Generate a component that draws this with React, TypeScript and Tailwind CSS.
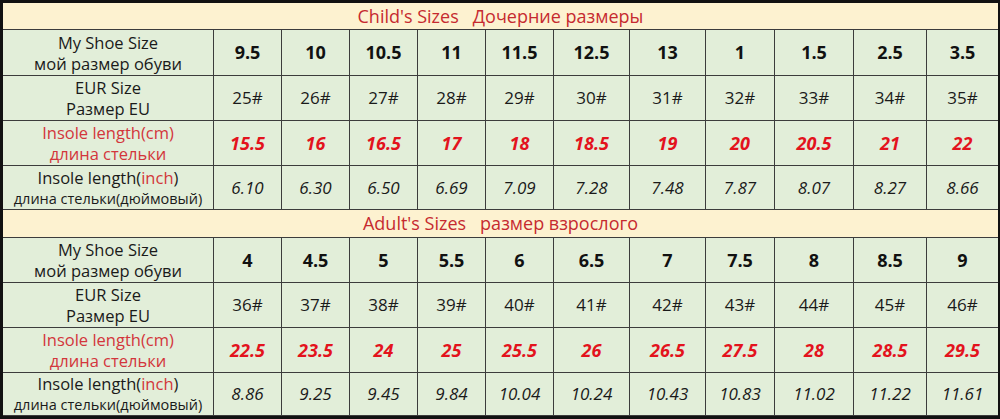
const COLS = 'grid-cols-[210px_67px_67px_67px_67px_67px_75px_75px_68px_78px_72px_1fr]'

type Section = {
  title: string
  shoe: string[]
  eur: string[]
  cm: string[]
  inch: string[]
}

const sections: Section[] = [
  {
    title: "Child's Sizes   Дочерние размеры",
    shoe: ['9.5', '10', '10.5', '11', '11.5', '12.5', '13', '1', '1.5', '2.5', '3.5'],
    eur: ['25#', '26#', '27#', '28#', '29#', '30#', '31#', '32#', '33#', '34#', '35#'],
    cm: ['15.5', '16', '16.5', '17', '18', '18.5', '19', '20', '20.5', '21', '22'],
    inch: ['6.10', '6.30', '6.50', '6.69', '7.09', '7.28', '7.48', '7.87', '8.07', '8.27', '8.66'],
  },
  {
    title: "Adult's Sizes   размер взрослого",
    shoe: ['4', '4.5', '5', '5.5', '6', '6.5', '7', '7.5', '8', '8.5', '9'],
    eur: ['36#', '37#', '38#', '39#', '40#', '41#', '42#', '43#', '44#', '45#', '46#'],
    cm: ['22.5', '23.5', '24', '25', '25.5', '26', '26.5', '27.5', '28', '28.5', '29.5'],
    inch: ['8.86', '9.25', '9.45', '9.84', '10.04', '10.24', '10.43', '10.83', '11.02', '11.22', '11.61'],
  },
]

function Row({
  label,
  values,
  height,
  valueClass,
}: {
  label: React.ReactNode
  values: string[]
  height: string
  valueClass: string
}) {
  return (
    <div className={`grid ${COLS} ${height} gap-px`}>
      <div className="flex flex-col items-center justify-center bg-[#e2eed9] text-center leading-[21px]">
        {label}
      </div>
      {values.map((v, i) => (
        <div key={i} className={`flex items-center justify-center bg-[#e2eed9] ${valueClass}`}>
          {v}
        </div>
      ))}
    </div>
  )
}

function SizeSection({ s, first }: { s: Section; first: boolean }) {
  return (
    <div className="flex flex-col gap-px">
      <div
        className={`flex items-center justify-center bg-[#fdf2d0] whitespace-pre text-[18px] text-[#c62a2f] ${
          first ? 'h-[26px]' : 'h-[27px]'
        }`}
      >
        {s.title}
      </div>
      <Row
        height={first ? 'h-[45px]' : 'h-[44px]'}
        values={s.shoe}
        valueClass="text-[18px] font-bold text-[#111]"
        label={
          <>
            <span className="text-[16.5px]">My Shoe Size</span>
            <span className="text-[16.5px]">мой размер обуви</span>
          </>
        }
      />
      <Row
        height="h-[44px]"
        values={s.eur}
        valueClass="text-[17px] text-[#1a1a1a]"
        label={
          <>
            <span className="text-[16.5px]">EUR Size</span>
            <span className="text-[16.5px]">Размер EU</span>
          </>
        }
      />
      <Row
        height="h-[44px]"
        values={s.cm}
        valueClass="text-[18px] font-bold italic text-[#e3131d]"
        label={
          <>
            <span className="text-[16.5px] text-[#d3363c]">Insole length(cm)</span>
            <span className="text-[16.5px] text-[#d3363c]">длина стельки</span>
          </>
        }
      />
      <Row
        height={first ? 'h-[43px]' : 'h-[42px]'}
        values={s.inch}
        valueClass="text-[17px] italic text-[#1a1a1a]"
        label={
          <>
            <span className="text-[16.5px]">
              Insole length(<span className="text-[#d2383a]">inch</span>)
            </span>
            <span className="text-[14.5px]">длина стельки(дюймовый)</span>
          </>
        }
      />
    </div>
  )
}

export default function App() {
  return (
    <div
      className="h-[419px] w-[1000px] overflow-hidden border-[3px] border-r-2 border-[#111] bg-[#111] text-[#1a1a1a]"
      style={{ fontFamily: '"Open Sans", "Noto Sans", sans-serif' }}
    >
      <div className="flex h-full flex-col gap-px bg-[#3c3c3c]">
        {sections.map((s, i) => (
          <SizeSection key={i} s={s} first={i === 0} />
        ))}
      </div>
    </div>
  )
}
